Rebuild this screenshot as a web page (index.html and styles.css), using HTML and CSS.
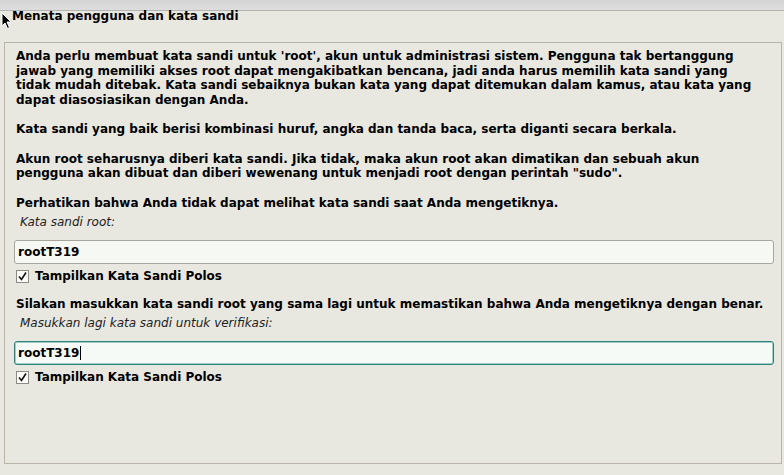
FILE: index.html
```html
<!DOCTYPE html>
<html lang="id">
<head>
<meta charset="utf-8">
<title>Menata pengguna dan kata sandi</title>
<link rel="stylesheet" href="styles.css">
</head>
<body>
<div class="topbar"></div>
<h1 class="title">Menata pengguna dan kata sandi</h1>
<div class="frame">
  <p class="para">Anda perlu membuat kata sandi untuk 'root', akun untuk administrasi sistem. Pengguna tak bertanggung jawab yang memiliki akses root dapat mengakibatkan bencana, jadi anda harus memilih kata sandi yang tidak mudah ditebak. Kata sandi sebaiknya bukan kata yang dapat ditemukan dalam kamus, atau kata yang dapat diasosiasikan dengan Anda.</p>
  <p class="para">Kata sandi yang baik berisi kombinasi huruf, angka dan tanda baca, serta diganti secara berkala.</p>
  <p class="para">Akun root seharusnya diberi kata sandi. Jika tidak, maka akun root akan dimatikan dan sebuah akun pengguna akan dibuat dan diberi wewenang untuk menjadi root dengan perintah "sudo".</p>
  <p class="para last">Perhatikan bahwa Anda tidak dapat melihat kata sandi saat Anda mengetiknya.</p>
  <div class="label">Kata sandi root:</div>
  <div class="field">rootT319</div>
  <div class="check"><span class="box"><svg viewBox="0 0 13 13" width="13" height="13"><path d="M3 6.5 L5.5 9.5 L10 2.5" fill="none" stroke="#111" stroke-width="1.6"/></svg></span><span>Tampilkan Kata Sandi Polos</span></div>
  <p class="para second">Silakan masukkan kata sandi root yang sama lagi untuk memastikan bahwa Anda mengetiknya dengan benar.</p>
  <div class="label">Masukkan lagi kata sandi untuk verifikasi:</div>
  <div class="field focus">rootT319<span class="caret"></span></div>
  <div class="check"><span class="box"><svg viewBox="0 0 13 13" width="13" height="13"><path d="M3 6.5 L5.5 9.5 L10 2.5" fill="none" stroke="#111" stroke-width="1.6"/></svg></span><span>Tampilkan Kata Sandi Polos</span></div>
</div>
<svg class="pointer" width="12" height="18" viewBox="0 0 12 18"><path d="M1 1 L1 14 L4 11 L6.5 16.5 L8.5 15.5 L6 10 L10 10 Z" fill="#000" stroke="#fff" stroke-width="1"/></svg>
</body>
</html>
```
FILE: styles.css
```css
html, body {
  margin: 0;
  padding: 0;
}
body {
  background: #e8e7e0;
  font-family: "DejaVu Sans", sans-serif;
  font-size: 12px;
  line-height: 14.67px;
  color: #000;
  width: 784px;
  height: 475px;
  overflow: hidden;
  position: relative;
}
.topbar {
  height: 10px;
  background: linear-gradient(#d4d4d4, #dddddd);
  border-bottom: 1px solid #b4b4b4;
}
.title {
  margin: -2px 0 0 0;
  padding-left: 12px;
  font-size: 12px;
  line-height: 14.67px;
  font-weight: bold;
  height: 33px;
}
.frame {
  margin: 0 2px 0 4px;
  height: 422px;
  border: 1px solid #b9b5a9;
  padding: 6px 7px 0 9px;
  box-sizing: border-box;
}
.para {
  margin: 0 9px 14.67px 0;
  padding-left: 2px;
  font-weight: bold;
}
.para.last {
  margin-bottom: 5px;
}
.para.second {
  margin: 13px 0 5px 0;
}
.label {
  font-style: italic;
  padding-left: 6px;
  color: #222;
}
.field {
  margin-top: 10px;
  height: 22px;
  border: 1px solid #a8a59c;
  border-radius: 3px;
  background: #f6f8f3;
  padding-left: 3px;
  font-weight: bold;
  line-height: 22px;
  display: flex;
  align-items: center;
}
.field.focus {
  border-color: #2e807a;
  box-shadow: inset 0 0 0 1px #9fcfc8;
  background: #f5faf7;
}
.caret {
  display: inline-block;
  width: 1px;
  height: 14px;
  background: #000;
  margin-left: 1px;
}
.check {
  margin-top: 5px;
  display: flex;
  align-items: center;
  gap: 6px;
  padding-left: 2px;
  font-weight: bold;
}
.box {
  width: 13px;
  height: 13px;
  box-sizing: border-box;
  border: 1px solid #8d8b84;
  background: #fbfbf9;
  display: flex;
  align-items: center;
  justify-content: center;
  position: relative;
}
.box svg {
  position: absolute;
  left: -1px;
  top: -1px;
}
.pointer {
  position: absolute;
  left: 1px;
  top: 12px;
}
```
